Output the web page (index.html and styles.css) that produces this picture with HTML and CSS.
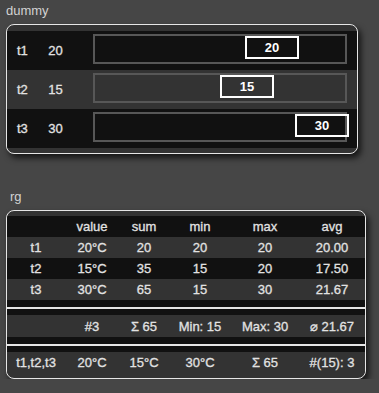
FILE: index.html
```html
<!DOCTYPE html>
<html lang="en">
<head>
    <meta charset="UTF-8">
    <meta name="viewport" content="width=device-width, initial-scale=1.0">
    <title>Groups</title>
    <link rel="stylesheet" href="styles.css">
</head>
<body>
    <!-- Slider group -->
    <div class="group">
        <div class="group-label">dummy</div>
        <div class="panel panel-bars">
            <div class="bar-row dark">
                <span class="name">t1</span>
                <span class="num">20</span>
                <div class="track"><div class="knob" style="left: 60%">20</div></div>
            </div>
            <div class="bar-row light">
                <span class="name">t2</span>
                <span class="num">15</span>
                <div class="track"><div class="knob" style="left: 50%">15</div></div>
            </div>
            <div class="bar-row dark">
                <span class="name">t3</span>
                <span class="num">30</span>
                <div class="track"><div class="knob" style="left: 80%">30</div></div>
            </div>
        </div>
    </div>

    <!-- Table group -->
    <div class="group group-rg">
        <div class="group-label">rg</div>
        <div class="panel panel-table">
            <table class="stats">
                <colgroup>
                    <col class="c1"><col class="c2"><col class="c3"><col class="c4"><col class="c5"><col class="c6">
                </colgroup>
                <thead>
                    <tr class="dark">
                        <th></th><th>value</th><th>sum</th><th>min</th><th>max</th><th>avg</th>
                    </tr>
                </thead>
                <tbody>
                    <tr class="light">
                        <td>t1</td><td>20°C</td><td>20</td><td>20</td><td>20</td><td>20.00</td>
                    </tr>
                    <tr class="dark">
                        <td>t2</td><td>15°C</td><td>35</td><td>15</td><td>20</td><td>17.50</td>
                    </tr>
                    <tr class="light">
                        <td>t3</td><td>30°C</td><td>65</td><td>15</td><td>30</td><td>21.67</td>
                    </tr>
                    <tr class="sep">
                        <td colspan="6"><div class="rule"></div></td>
                    </tr>
                    <tr class="light summary">
                        <td></td><td>#3</td><td>Σ 65</td><td>Min: 15</td><td>Max: 30</td><td>⌀ 21.67</td>
                    </tr>
                    <tr class="sep">
                        <td colspan="6"><div class="rule"></div></td>
                    </tr>
                    <tr class="light">
                        <td>t1,t2,t3</td><td>20°C</td><td>15°C</td><td>30°C</td><td>Σ 65</td><td>#(15): 3</td>
                    </tr>
                </tbody>
            </table>
        </div>
    </div>
</body>
</html>
```

FILE: styles.css
```css
body {
    margin: 0;
    padding: 3px 0 0 6px;
    background-color: #464646;
    font-family: "Liberation Sans", Arial, sans-serif;
    font-size: 13px;
    color: #e2e2e2;
    -webkit-text-stroke: 0.3px currentColor;
}
.group-label {
    height: 15px;
    line-height: 15px;
    margin-bottom: 6px;
    color: #d2d2d2;
    -webkit-text-stroke: 0;
}
.group-rg {
    margin-top: 35px;
}
.group-rg .group-label {
    padding-left: 4px;
}
.panel {
    box-sizing: border-box;
    background-color: #333;
    border: 1px solid #e6e6e6;
    border-radius: 8px;
    box-shadow: 3px 4px 6px rgba(0, 0, 0, 0.7);
    overflow: hidden;
}
.dark {
    background-color: #111;
}
.light {
    background-color: #333;
}

/* slider rows */
.panel-bars {
    width: 352px;
    padding: 6px 0 5px;
}
.bar-row {
    display: flex;
    align-items: flex-start;
    height: 39px;
    padding: 0 10px;
}
.bar-row .name,
.bar-row .num {
    align-self: center;
    line-height: 15px;
}
.bar-row .name {
    width: 26px;
}
.bar-row .num {
    width: 25px;
    text-align: center;
}
.track {
    position: relative;
    flex: 1;
    height: 30px;
    margin: 3px 0 0 25px;
    box-sizing: border-box;
    border: 2px solid #575757;
}
.knob {
    position: absolute;
    top: 0;
    width: 54px;
    height: 23px;
    box-sizing: border-box;
    border: 2px solid #fff;
    line-height: 19px;
    text-align: center;
    font-weight: bold;
    color: #fff;
    -webkit-text-stroke: 0;
}

/* stats table */
.panel-table {
    width: 360px;
    padding: 5px 0 5px;
}
.stats {
    width: 100%;
    border-collapse: collapse;
    table-layout: fixed;
}
.c1 { width: 58px; }
.c2 { width: 54px; }
.c3 { width: 50px; }
.c4 { width: 62px; }
.c5 { width: 68px; }
.c6 { width: 66px; }
.stats th,
.stats td {
    height: 21px;
    padding: 0;
    text-align: center;
    font-weight: normal;
    white-space: nowrap;
}
.stats .summary td {
    height: 22px;
}
.stats .sep td {
    height: auto;
    padding: 7px 0 6px;
    background-color: #111;
}
.rule {
    height: 2px;
    background-color: #e6e6e6;
}
```
